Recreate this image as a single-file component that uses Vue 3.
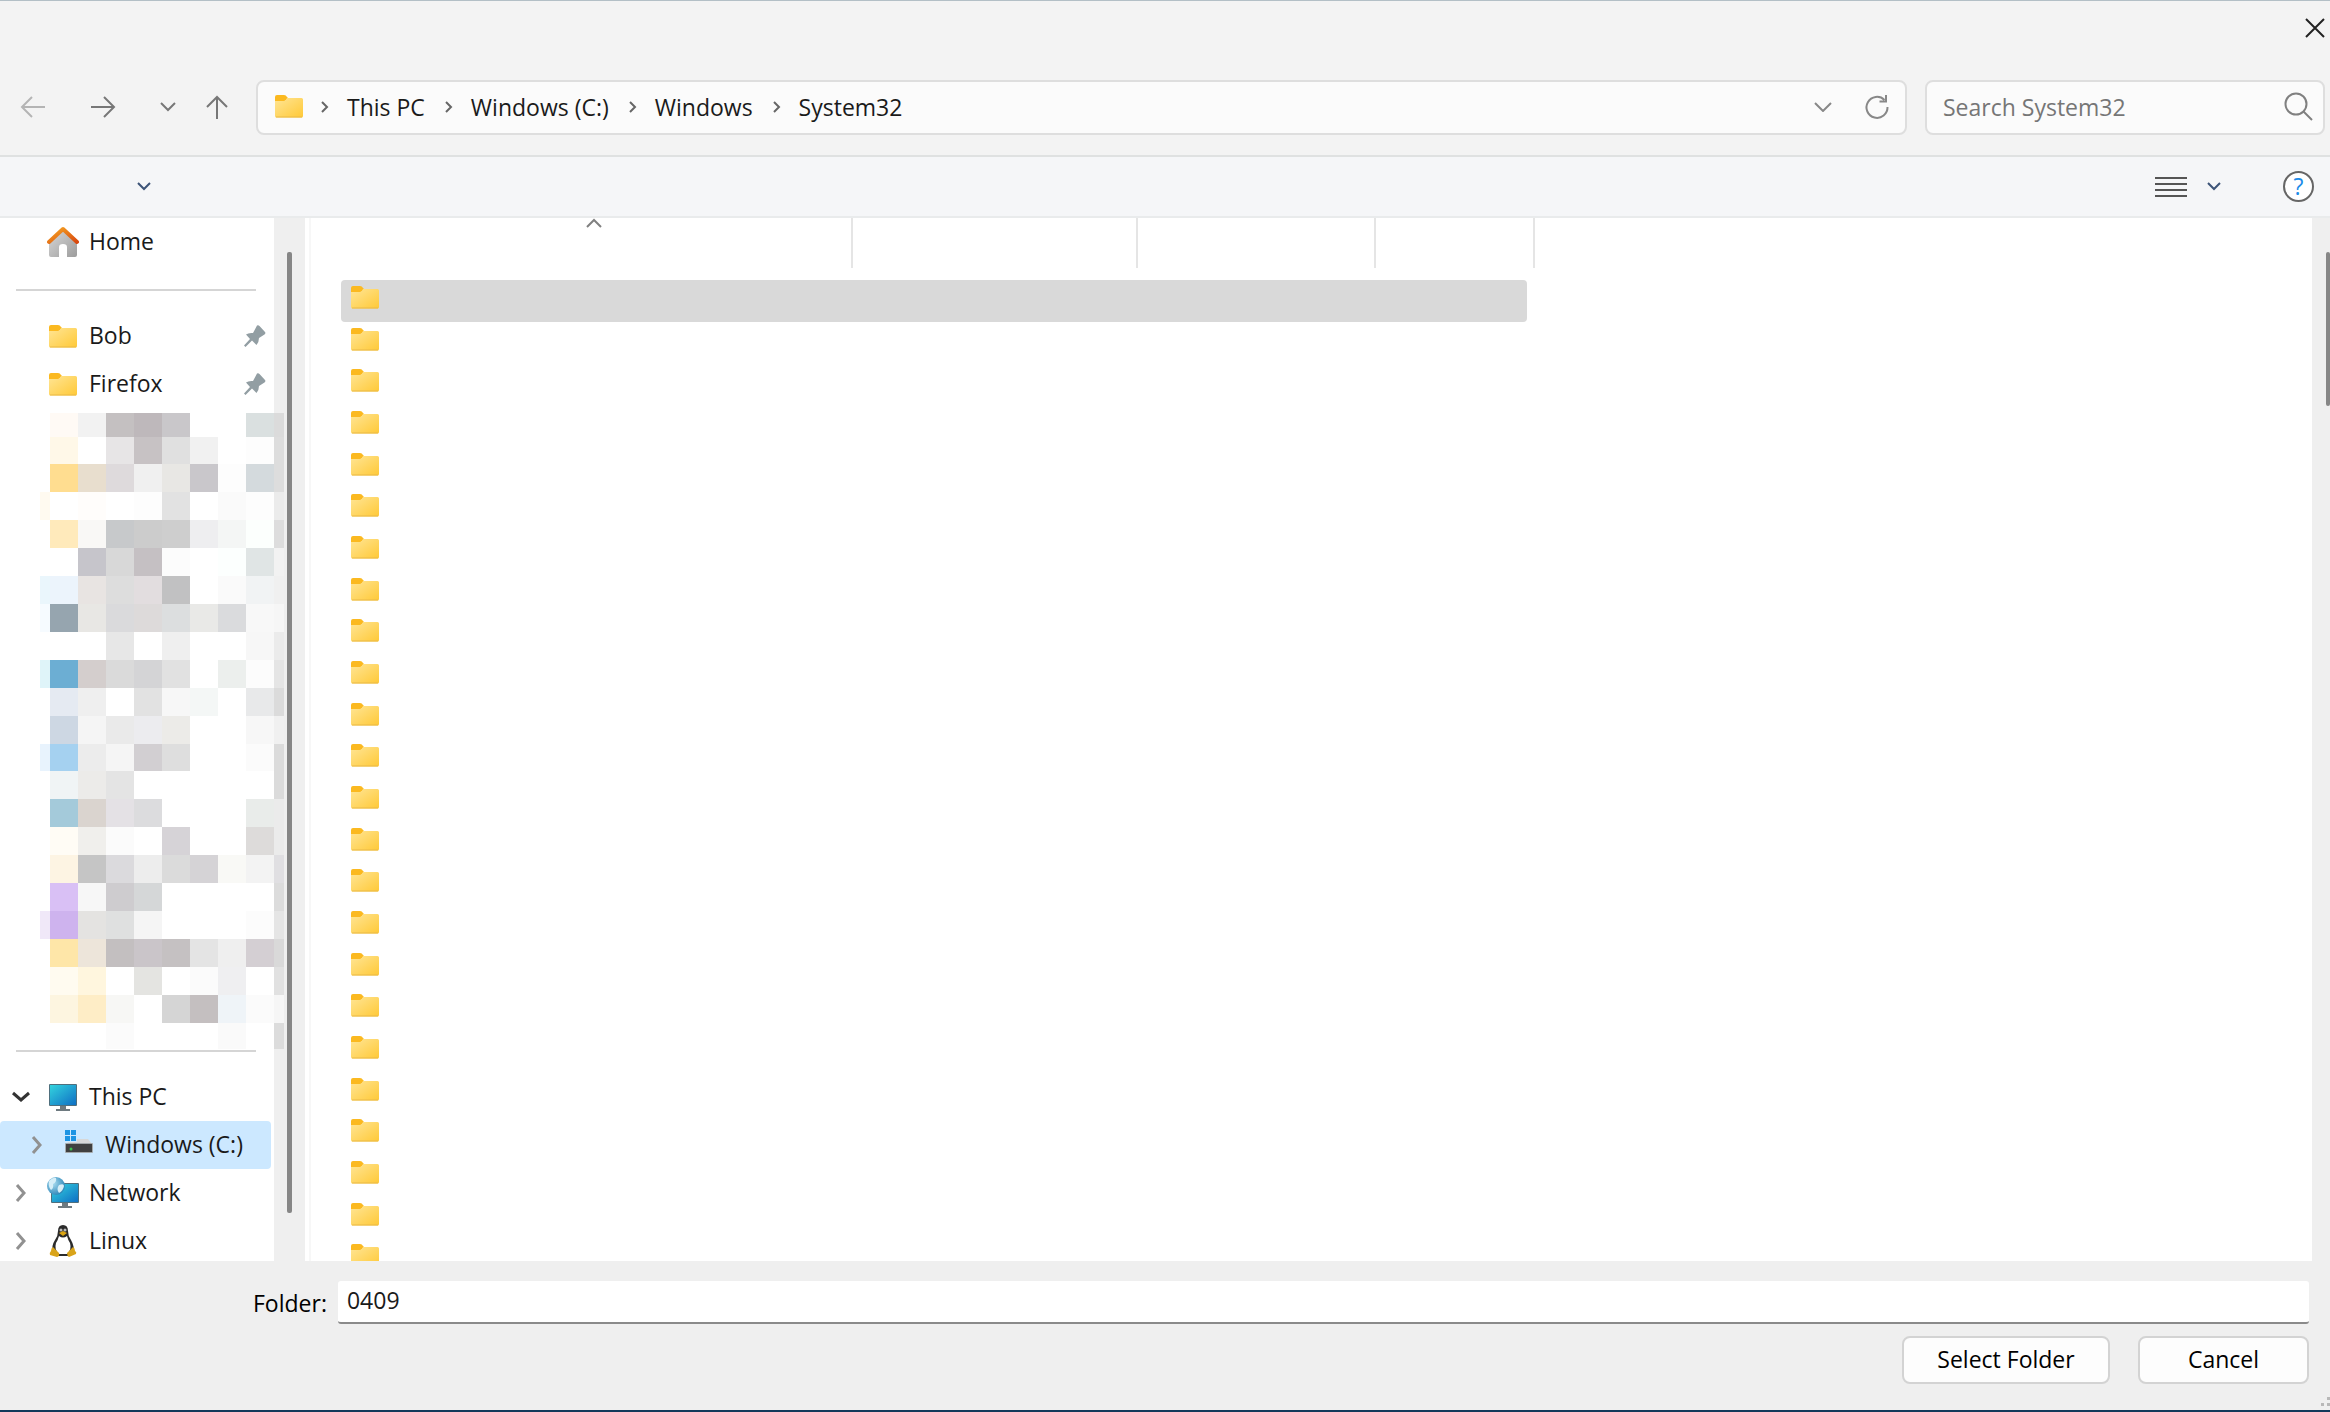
<script setup>
import { ref } from 'vue'

const crumbs = ['This PC', 'Windows (C:)', 'Windows', 'System32']
const pinned = ['Bob', 'Firefox']
const drives = [
  { name: 'This PC', icon: 'pc', open: true },
  { name: 'Windows (C:)', icon: 'drive', nested: true, selected: true },
  { name: 'Network', icon: 'network' },
  { name: 'Linux', icon: 'linux' },
]
const folderCount = 24
const folder = ref('0409')
const search = ref('')

// Redacted block of the navigation pane: one string per row, "-" is an empty cell.
const cellWidths = [10, 28, 28, 28, 28, 28, 28, 28, 28, 10]
const mosaicRows = [
  [24, '- fffaf5 f2f2f2 c4c0c1 beb8bb c9c7ca - - dae0e0 dbdbdb'],
  [27, '- fff8e8 - e7e5e6 c7c2c4 e0e0e0 f1f1f1 - fdfdfd dddddd'],
  [28, '- ffdd90 e8dece dedadc f0f0f0 e8e7e4 c9c7cb fdfdfd d4dadd dddddd'],
  [28, 'fffaf0 - fffdfb - fdfdfd e2e2e2 - fafafa fdfdfd ebebeb'],
  [28, '- ffeabb f9f8f6 c7c9cb cccccc cecece eeeef0 f4f6f5 fcfffd dddddd'],
  [28, '- - c6c5cb d8d8d8 c5c0c3 fcfcfc - fcfffe e0e5e5 f2f2f2'],
  [28, 'eaf6fc ecf4fc e8e4e2 dddddd e2dddf c1c1c2 - fafafa f1f3f4 f0f0f0'],
  [28, 'f6fbff 96a5af e8e7e4 dadadc dddada dcdedf e9e9e7 dadbdd f8f8f8 f6f6f6'],
  [28, '- - - e7e7e7 - efefef - - f7f7f7 ebebeb'],
  [28, 'dff4f9 6caed3 d4cecd dadada d4d4d6 e1e1e1 - ecefed fcfcfc e5e5e5'],
  [28, '- e5eaf2 efefef - e2e2e2 f7f7f7 f4f7f6 - e8e9ea dbdbdb'],
  [28, '- cdd7e3 f5f5f5 eaeaea ececef ecebe8 - - f7f7f7 f0f0f0'],
  [27, 'e8f3fd a5d1f0 ececec f5f5f5 d2cfd2 dedede - - fbfbfb dbdbdb'],
  [28, '- f0f4f5 ecebe9 e4e4e4 - - - - - dbdbdb'],
  [28, '- a4cada dad4cf e4e1e5 dcdcde - - - e9ecea ebebeb'],
  [28, '- fffcf5 f0efec fbfbfb - d6d3d7 - - dddbda ebebeb'],
  [28, '- fdf4e3 c5c5c5 dbdadd ededed dbdbdb d5d3d6 f9f9f6 f3f3f3 e0dfe2'],
  [28, '- d9c0f5 f7f7f7 cecccf d5d7d8 - - - - dcdcdc'],
  [28, 'f0e8f8 ceb3ee e4e3e1 dfe0e0 f5f5f5 - - - fcfcfc e5e5e5'],
  [28, '- fee6a8 ede5da c3bfc0 cac5c9 c5c1c2 e4e4e4 efefef d4cfd3 d9d9d9'],
  [28, '- fffbf0 fff6de - e4e4e1 - fbfbfb efeff1 - e1e1e1'],
  [28, '- fdf5e0 feedc6 f7f7f5 - d5d5d5 c4bfc0 eff4f8 fbfbfb f6f6f6'],
  [26, '- - - fbfbfb - - - fafafa - dcdcdc'],
]
const tiles = []
let top = 0
for (const [height, row] of mosaicRows) {
  let left = 0
  row.split(' ').forEach((color, i) => {
    if (color !== '-') tiles.push({ x: left, y: top, w: cellWidths[i], h: height, fill: '#' + color })
    left += cellWidths[i]
  })
  top += height
}
</script>

<template>
  <div class="dialog">
    <svg class="defs" width="0" height="0" aria-hidden="true">
      <defs>
        <linearGradient id="gFolder" x1="0" y1="0" x2="1" y2="1">
          <stop offset="0" stop-color="#ffe595" /><stop offset="1" stop-color="#ffc937" />
        </linearGradient>
        <linearGradient id="gScreen" x1="0" y1="0" x2="1" y2="1">
          <stop offset="0" stop-color="#33d3de" /><stop offset="1" stop-color="#0f6fc4" />
        </linearGradient>
        <linearGradient id="gRoof" x1="0" y1="0" x2="1" y2="1">
          <stop offset="0" stop-color="#f6a623" /><stop offset="1" stop-color="#d8480f" />
        </linearGradient>
        <linearGradient id="gWall" x1="0" y1="0" x2="1" y2="1">
          <stop offset="0" stop-color="#d9d9d9" /><stop offset="1" stop-color="#9c9c9c" />
        </linearGradient>
        <radialGradient id="gGlobe" cx="0.35" cy="0.35" r="0.7">
          <stop offset="0" stop-color="#a9dcf0" /><stop offset="1" stop-color="#2c86b8" />
        </radialGradient>
        <symbol id="folder" viewBox="0 0 28 23">
          <path d="M0 2Q0 0 2 0H9Q11 0 12 2L13 3L10 6H0Z" fill="#fbb920" />
          <path d="M0 6H9Q11 6 12 3H26.500Q28 3 28 4.500V21Q28 22.500 26.500 22.500H1.500Q0 22.500 0 21Z" fill="url(#gFolder)" />
          <path d="M1 22H27" stroke="#e9b949" stroke-width="1" />
        </symbol>
      </defs>
    </svg>

    <header class="title-bar">
      <button class="icon-btn close" aria-label="Close">
        <svg width="20" height="20" viewBox="0 0 20 20"><path d="M1 1L19 19M19 1L1 19" stroke="#222" stroke-width="2" /></svg>
      </button>
    </header>

    <nav class="nav-bar" aria-label="Navigation">
      <div class="nav-buttons">
        <button class="icon-btn back" aria-label="Back">
          <svg width="26" height="22" viewBox="0 0 26 22" fill="none" stroke="#b4b4b4" stroke-width="2"><path d="M25 11H2M12 1L2 11L12 21" /></svg>
        </button>
        <button class="icon-btn forward" aria-label="Forward">
          <svg width="26" height="22" viewBox="0 0 26 22" fill="none" stroke="#777" stroke-width="2"><path d="M1 11H24M14 1L24 11L14 21" /></svg>
        </button>
        <button class="icon-btn recent" aria-label="Recent locations">
          <svg width="16" height="10" viewBox="0 0 16 10" fill="none" stroke="#777" stroke-width="2"><path d="M1 1L8 8L15 1" /></svg>
        </button>
        <button class="icon-btn up" aria-label="Up">
          <svg width="24" height="24" viewBox="0 0 24 24" fill="none" stroke="#777" stroke-width="2"><path d="M12 24V2M2 12L12 2L22 12" /></svg>
        </button>
      </div>

      <div class="address">
        <svg class="address-folder" width="28" height="23"><use href="#folder" /></svg>
        <template v-for="crumb in crumbs" :key="crumb">
          <svg class="crumb-arrow" width="9" height="12" viewBox="0 0 9 12" fill="none" stroke="#666" stroke-width="2"><path d="M2 1L7 6L2 11" /></svg>
          <a class="crumb" href="#">{{ crumb }}</a>
        </template>
        <div class="address-tools">
          <button class="icon-btn" aria-label="Previous locations">
            <svg width="18" height="10" viewBox="0 0 18 10" fill="none" stroke="#888" stroke-width="2"><path d="M1 1L9 9L17 1" /></svg>
          </button>
          <button class="icon-btn" aria-label="Refresh">
            <svg width="26" height="26" viewBox="0 0 26 26" fill="none" stroke="#888" stroke-width="2"><path d="M20.500 6A10.500 10.500 0 1 0 23.500 13M22 1V7.500H15.500" /></svg>
          </button>
        </div>
      </div>

      <div class="search">
        <input v-model="search" type="text" placeholder="Search System32" aria-label="Search System32" />
        <svg width="29" height="29" viewBox="0 0 29 29" fill="none" stroke="#808080" stroke-width="2"><circle cx="12" cy="12" r="10.500" /><path d="M19.500 19.500L28 28" /></svg>
      </div>
    </nav>

    <div class="toolbar">
      <button class="icon-btn organize" aria-label="Organize">
        <svg width="14" height="9" viewBox="0 0 14 9" fill="none" stroke="#3d5478" stroke-width="2"><path d="M1 1L7 7L13 1" /></svg>
      </button>
      <div class="view-tools">
        <button class="icon-btn" aria-label="Change view">
          <svg width="32" height="22" viewBox="0 0 32 22" stroke="#555" stroke-width="2"><path d="M0 2H32M0 8H32M0 14H32M0 20H32" /></svg>
        </button>
        <button class="icon-btn" aria-label="More views">
          <svg width="14" height="9" viewBox="0 0 14 9" fill="none" stroke="#3d5478" stroke-width="2"><path d="M1 1L7 7L13 1" /></svg>
        </button>
        <button class="help" aria-label="Help">?</button>
      </div>
    </div>

    <main class="body">
      <aside class="sidebar">
        <a class="item" href="#">
          <svg class="item-icon" width="32" height="32" viewBox="0 0 32 32">
            <path d="M2 14L16 3L30 14V29Q30 31 28 31H20V21Q20 18 16 18Q12 18 12 21V31H4Q2 31 2 29Z" fill="url(#gWall)" />
            <path d="M2 16L16 3L30 16" fill="none" stroke="url(#gRoof)" stroke-width="4" stroke-linejoin="round" stroke-linecap="round" />
          </svg>
          <span class="item-name">Home</span>
        </a>
        <hr class="rule" />
        <a v-for="name in pinned" :key="name" class="item" href="#">
          <svg class="item-icon" width="32" height="23"><use href="#folder" x="2" width="28" height="23" /></svg>
          <span class="item-name">{{ name }}</span>
          <svg class="pin" width="22" height="22" viewBox="0 0 22 22">
            <path d="M13 0.500Q14.500 0 15.500 1L21 7Q22 8.500 20.500 9.500L15 13Q15 17 12.500 20L8 15.500L1.500 22L0 20.500L6 14L2 9.500Q4.500 7.500 9 8Z" fill="#929ea3" />
          </svg>
        </a>
        <svg class="mosaic" width="244" height="636" shape-rendering="crispEdges" aria-hidden="true">
          <rect v-for="(t, i) in tiles" :key="i" :x="t.x" :y="t.y" :width="t.w" :height="t.h" :fill="t.fill" />
        </svg>
        <hr class="rule lower" />
        <a v-for="d in drives" :key="d.name" class="item tree" :class="{ nested: d.nested, selected: d.selected }" href="#">
          <span class="twisty">
            <svg v-if="d.open" class="open" width="18" height="12" viewBox="0 0 18 12" fill="none" stroke="#333" stroke-width="3"><path d="M1 2L9 9L17 2" /></svg>
            <svg v-else width="12" height="18" viewBox="0 0 12 18" fill="none" stroke="#919191" stroke-width="3"><path d="M2 1L9 9L2 17" /></svg>
          </span>
          <svg v-if="d.icon === 'pc'" class="item-icon" width="32" height="28" viewBox="0 0 32 28">
            <rect x="2" y="1" width="28" height="22" rx="1" fill="#4f6f7d" />
            <rect x="3" y="2" width="26" height="20" fill="url(#gScreen)" />
            <path d="M13 23H19V26H23V28H9V26H13Z" fill="#6e7a80" />
          </svg>
          <svg v-else-if="d.icon === 'drive'" class="item-icon" width="32" height="32" viewBox="0 0 32 32">
            <path d="M14 10H25L30 16H3L5 13H14Z" fill="#d8d8d8" />
            <path d="M2 1H7V6H2ZM8 1H13V6H8ZM2 7H7V12H2ZM8 7H13V12H8Z" fill="#1d94e3" />
            <rect x="2" y="14" width="28" height="10" rx="1" fill="#a3a8ab" />
            <rect x="3" y="15" width="26" height="8" fill="#404040" />
            <circle cx="8" cy="20" r="1.500" fill="#35c24a" />
          </svg>
          <svg v-else-if="d.icon === 'network'" class="item-icon" width="32" height="32" viewBox="0 0 32 32">
            <rect x="4" y="6" width="28" height="20" rx="1" fill="#4f6f7d" />
            <rect x="5" y="7" width="26" height="18" fill="url(#gScreen)" />
            <path d="M15 26H21V29H25V31H11V29H15Z" fill="#6e7a80" />
            <circle cx="9" cy="9" r="9" fill="url(#gGlobe)" />
            <path d="M2 4Q6 0 9 1Q10 5 6 7Q7 11 4 13Q1 10 2 4ZM12 8Q17 6 17 9Q16 14 12 16Q9 12 12 8Z" fill="#d5eef8" />
          </svg>
          <svg v-else class="item-icon" width="32" height="32" viewBox="0 0 32 32">
            <path d="M11 6Q11 0 16 0Q21 0 21 6Q21 11 24 15Q28 22 26 27L21 31H11L6 27Q4 21 8 15Q11 11 11 6Z" fill="#2b2b2b" />
            <path d="M12 11Q16 14 20 11Q21 15 23 18Q25 25 20 29H12Q7 25 9 18Q11 15 12 11Z" fill="#fff" />
            <circle cx="14" cy="5" r="1.500" fill="#bbb" /><circle cx="18" cy="5" r="1.500" fill="#bbb" />
            <path d="M12 8L16 6L20 8L16 11Z" fill="#dba514" />
            <path d="M6 22L12 28Q13 31 10 32L3 30Q2 28 4 26Q4 23 6 22ZM26 22L20 28Q20 31 22 32L29 29Q30 27 28 26Q28 23 26 22Z" fill="#d9a41a" />
          </svg>
          <span class="item-name">{{ d.name }}</span>
        </a>
      </aside>
      <div class="scrollbar side"><div class="thumb"></div></div>

      <section class="files" aria-label="Folders">
        <div class="columns">
          <div class="column name">
            <svg width="16" height="10" viewBox="0 0 16 10" fill="none" stroke="#808080" stroke-width="2"><path d="M1 9L8 2L15 9" /></svg>
          </div>
          <div class="column modified"></div>
          <div class="column type"></div>
          <div class="column size"></div>
        </div>
        <ul class="rows">
          <li v-for="n in folderCount" :key="n" :class="{ selected: n === 1 }">
            <svg width="28" height="23"><use href="#folder" /></svg>
          </li>
        </ul>
      </section>
      <div class="scrollbar main"><div class="thumb"></div></div>
    </main>

    <footer class="footer">
      <div class="field">
        <label for="folder-name">Folder:</label>
        <input id="folder-name" v-model="folder" type="text" />
      </div>
      <div class="actions">
        <button class="action select">Select Folder</button>
        <button class="action cancel">Cancel</button>
      </div>
      <svg class="grip" width="10" height="12" viewBox="0 0 10 12" fill="#b8b8b8"><path d="M1 8H4V11H1ZM7 8H10V11H7ZM7 2H10V5H7Z" /></svg>
    </footer>
  </div>
</template>

<style>
body {
  margin: 0;
}
</style>

<style scoped>
.dialog {
  box-sizing: border-box;
  display: flex;
  flex-direction: column;
  height: 100vh;
  border-top: 1px solid #b3bfc6;
  border-bottom: 2px solid #12385a;
  background: #f3f3f3;
  color: #1a1a1a;
  font-family: "Open Sans", "Noto Sans", sans-serif;
  font-size: 23px;
  line-height: 32px;
  overflow: hidden;
}
.dialog * {
  box-sizing: border-box;
}
.defs {
  position: absolute;
}
svg {
  display: block;
  flex: none;
}
button,
input {
  font: inherit;
  color: inherit;
}
a {
  color: inherit;
  text-decoration: none;
}
.icon-btn {
  display: flex;
  padding: 0;
  border: 0;
  background: none;
}
.title-bar {
  display: flex;
  flex: none;
  align-items: flex-start;
  justify-content: flex-end;
  height: 79px;
  padding: 17px 5px 0 0;
}
.nav-bar {
  display: flex;
  flex: none;
  height: 75px;
  padding-right: 5px;
}
.nav-buttons {
  display: flex;
  align-items: center;
  width: 256px;
  height: 54px;
  padding-left: 20px;
}
.forward,
.recent {
  margin-left: 44px;
}
.up {
  margin-left: 29px;
}
.address,
.search {
  display: flex;
  align-items: center;
  height: 55px;
  padding-bottom: 2px;
  border: 2px solid #dedede;
  border-radius: 8px;
  background: #fbfbfb;
}
.address {
  flex: 1;
  padding-left: 17px;
  padding-right: 15px;
}
.address-folder {
  margin-right: 17px;
}
.crumb {
  margin: 0 19px 0 18px;
}
.address-tools {
  display: flex;
  align-items: center;
  gap: 32px;
  margin-left: auto;
}
.search {
  width: 400px;
  margin-left: 18px;
  padding-left: 16px;
  padding-right: 10px;
}
.search input {
  flex: 1;
  min-width: 0;
  padding: 0;
  border: 0;
  outline: 0;
  background: none;
}
.search input::placeholder {
  color: #767676;
  opacity: 1;
}
.toolbar {
  display: flex;
  align-items: center;
  justify-content: space-between;
  flex: none;
  height: 63px;
  padding: 0 16px 0 137px;
  border-top: 2px solid #dfe1e1;
  border-bottom: 2px solid #e9ebec;
  background: #f5f6f8;
}
.view-tools {
  display: flex;
  align-items: center;
}
.view-tools .icon-btn {
  margin-right: 20px;
}
.help {
  width: 31px;
  height: 31px;
  margin-left: 42px;
  padding: 0;
  border: 2px solid #666;
  border-radius: 50%;
  background: #fff;
  color: #1b8be8;
  line-height: 27px;
}
.body {
  display: flex;
  flex: 1;
  min-height: 0;
  background: #fff;
}
.sidebar {
  position: relative;
  z-index: 1;
  flex: none;
  width: 274px;
  overflow-y: clip;
}
.item {
  display: flex;
  align-items: center;
  height: 48px;
  padding-left: 47px;
  margin-right: 3px;
}
.item-icon {
  margin-right: 10px;
}
.item-name {
  padding-bottom: 2px;
}
.pin {
  margin: 0 5px 0 auto;
}
.tree {
  padding-left: 12px;
}
.nested {
  padding-left: 28px;
}
.item.selected {
  border-radius: 4px;
  background: #cce8ff;
}
.twisty {
  width: 35px;
  padding-left: 3px;
}
.twisty .open {
  margin-left: -3px;
}
.rule {
  height: 2px;
  margin: 23px 18px 21px 16px;
  border: 0;
  background: #d5d5d5;
}
.mosaic {
  margin: 5px 0 0 40px;
}
.lower {
  margin-top: 1px;
}
.scrollbar {
  display: flex;
  flex: none;
  background: #efefef;
}
.scrollbar .thumb {
  border-radius: 2px;
  background: #868686;
}
.side {
  width: 31px;
  padding: 34px 13px 48px;
}
.side .thumb {
  width: 5px;
}
.main {
  width: 18px;
  padding-top: 34px;
  justify-content: flex-end;
}
.main .thumb {
  width: 4px;
  height: 154px;
}
.files {
  flex: 1;
  min-width: 0;
  margin-left: 4px;
  border-left: 2px solid #f7f7f7;
  overflow: hidden;
}
.columns {
  display: flex;
  height: 50px;
  margin-bottom: 12px;
}
.column {
  border-right: 2px solid #e5e5e5;
}
.name {
  width: 542px;
  padding-left: 275px;
}
.modified {
  width: 285px;
}
.type {
  width: 238px;
}
.size {
  width: 159px;
}
.rows {
  display: flex;
  flex-direction: column;
  width: 1186px;
  height: 1000px;
  margin: 0 0 0 30px;
  padding: 0;
  list-style: none;
}
.rows li {
  flex: 1;
  padding: 6px 10px;
}
.rows .selected {
  border-radius: 4px;
  background: #d9d9d9;
}
.footer {
  position: relative;
  flex: none;
  height: 149px;
  padding: 20px 21px 0 253px;
  background: #efefef;
}
.field {
  display: flex;
  align-items: center;
  gap: 11px;
}
.field label {
  flex: none;
  color: #000;
}
.field input {
  flex: 1;
  height: 43px;
  padding: 0 9px 4px;
  border: 0;
  border-bottom: 2px solid #8a8a8a;
  border-radius: 3px;
  outline: 0;
  background: #fff;
}
.actions {
  display: flex;
  justify-content: flex-end;
  gap: 28px;
  margin-top: 12px;
}
.action {
  height: 48px;
  padding: 0 0 2px;
  border: 2px solid #d3d3d3;
  border-radius: 8px;
  background: #fdfdfd;
  color: #000;
}
.select {
  width: 208px;
}
.cancel {
  width: 171px;
}
.grip {
  position: absolute;
  right: 0;
  bottom: 3px;
}
</style>
